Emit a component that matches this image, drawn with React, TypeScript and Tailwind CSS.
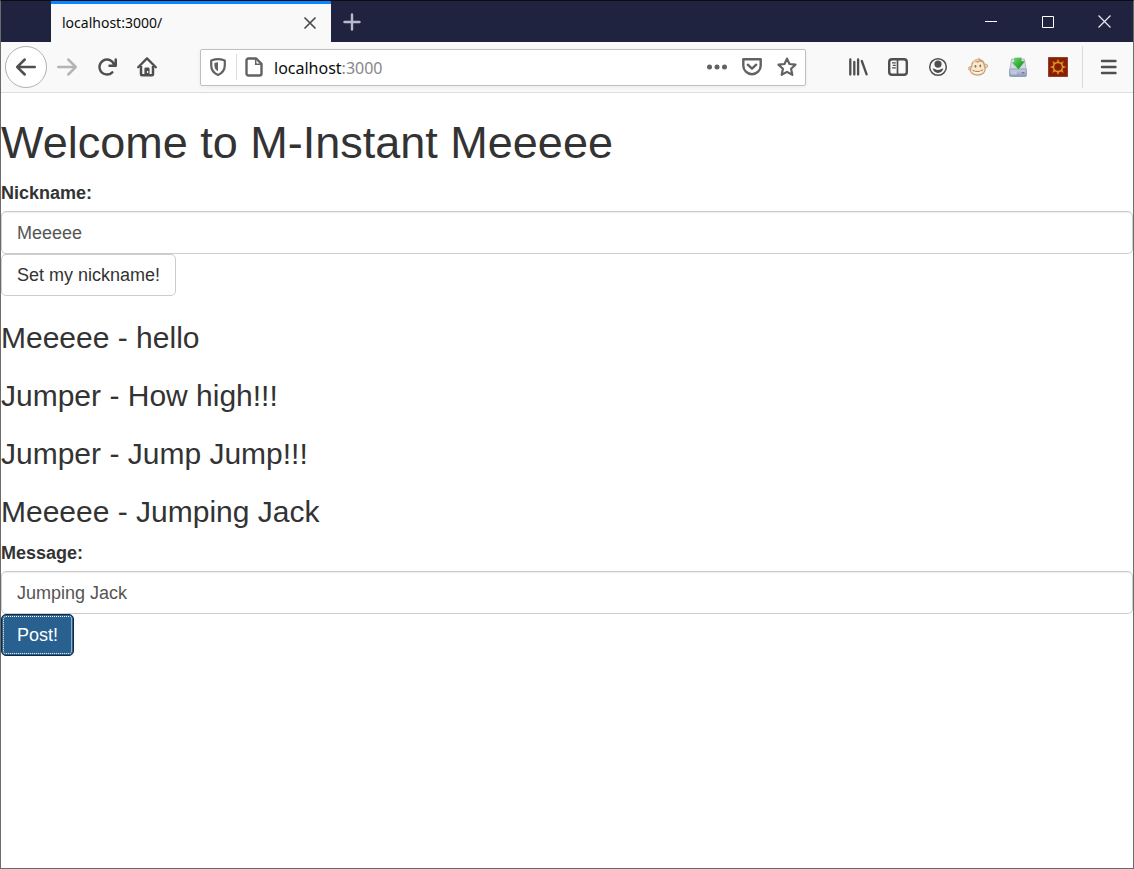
import { useState, type ReactNode } from "react";

function IconButton({ label, children }: { label: string; children: ReactNode }) {
  return (
    <button
      type="button"
      aria-label={label}
      className="flex h-10 w-10 shrink-0 items-center justify-center text-[#4f4f50]"
    >
      {children}
    </button>
  );
}

function ArrowLeft({ className }: { className?: string }) {
  return (
    <svg viewBox="0 0 16 16" fill="currentColor" className={className}>
      <path d="M15 7H3.414l4.293-4.293a1 1 0 0 0-1.414-1.414l-6 6a1 1 0 0 0 0 1.414l6 6a1 1 0 0 0 1.414-1.414L3.414 9H15a1 1 0 0 0 0-2z" />
    </svg>
  );
}

function ReloadIcon() {
  return (
    <svg viewBox="0 0 16 16" fill="currentColor" className="h-5 w-5">
      <path d="M15 1a1 1 0 0 0-1 1v2.418A6.995 6.995 0 1 0 8 15a6.954 6.954 0 0 0 4.95-2.05 1 1 0 0 0-1.414-1.414A5.019 5.019 0 1 1 12.549 6H10a1 1 0 0 0 0 2h5a1 1 0 0 0 1-1V2a1 1 0 0 0-1-1z" />
    </svg>
  );
}

function HomeIcon() {
  return (
    <svg viewBox="0 0 20 20" fill="none" stroke="currentColor" className="h-5 w-5">
      <path d="M1.200 10.200 10 1.400l8.800 8.800" strokeWidth="2.300" strokeLinecap="round" strokeLinejoin="round" />
      <path d="M4 9v8.200q0 1 1 1h10q1 0 1-1V9" strokeWidth="2.500" />
      <path d="M7.400 18v-6.200q0-1.300 1.300-1.300h2.600q1.300 0 1.300 1.300V18z" fill="currentColor" stroke="none" />
      <path d="M10.600 14v2" stroke="#f9f9fa" strokeWidth="1.300" />
    </svg>
  );
}

function ShieldIcon() {
  return (
    <svg viewBox="0 0 20 20" fill="none" stroke="currentColor" className="h-5 w-5">
      <path d="M10 2.200c2 0 4 .4 6.800 1.300v4.700c0 5-2.800 8-6.800 9.700-4-1.700-6.800-4.700-6.800-9.700V3.500C6 2.600 8 2.200 10 2.200z" strokeWidth="2.200" strokeLinejoin="round" />
      <path d="M10 5.300v9c-2.300-1.200-3.600-3.200-3.600-6.100V5.900Q8.500 5.300 10 5.300z" fill="currentColor" stroke="none" />
    </svg>
  );
}

function PageIcon() {
  return (
    <svg viewBox="0 0 20 20" fill="none" stroke="currentColor" className="h-5 w-5">
      <path d="M4.500 1.500h7.700L17.500 6.800v9.700q0 2-2 2h-11q-2 0-2-2v-13q0-2 2-2z" strokeWidth="2.400" strokeLinejoin="round" />
      <path d="M11.700 1.500v5.800h5.800" strokeWidth="1.500" />
    </svg>
  );
}

function PocketIcon() {
  return (
    <svg viewBox="0 0 20 20" fill="none" stroke="currentColor" strokeLinejoin="round" strokeLinecap="round" className="h-5 w-5">
      <path d="M1.300 2.300h17.400v6.500a8.700 8.400 0 0 1-17.400 0z" strokeWidth="2.400" />
      <path d="m5.800 7.700 4.200 3.900 4.200-3.900" strokeWidth="2.400" />
    </svg>
  );
}

function StarIcon() {
  return (
    <svg viewBox="0 0 20 20" fill="none" stroke="currentColor" className="h-5 w-5">
      <path d="m10 1.600 2.500 5.400 6 .7-4.400 4.100 1.200 6L10 14.900l-5.300 2.900 1.200-6L1.500 7.700l6-.7z" strokeWidth="2.200" strokeLinejoin="round" />
    </svg>
  );
}

function LibraryIcon() {
  return (
    <svg viewBox="0 0 20 20" fill="none" stroke="currentColor" strokeLinecap="round" className="h-5 w-5">
      <path d="M2.300 2.500v15M6.300 5v12.500M10.100 2.500v15" strokeWidth="2.300" />
      <path d="m13.800 4 4.800 13.300" strokeWidth="2.300" />
    </svg>
  );
}

function SidebarIcon() {
  return (
    <svg viewBox="0 0 20 20" fill="none" stroke="currentColor" className="h-5 w-5">
      <rect x="1.200" y="2.200" width="17.600" height="15.600" rx="2.800" strokeWidth="2.400" />
      <path d="M9.500 3v14" strokeWidth="1.700" />
      <path d="M4 5.900h3.800M4.800 8.400h3M4 10.900h3.800" strokeWidth="1.200" />
    </svg>
  );
}

function AccountIcon() {
  return (
    <svg viewBox="0 0 20 20" fill="currentColor" className="h-5 w-5">
      <circle cx="10" cy="10" r="8.300" fill="none" stroke="currentColor" strokeWidth="1.500" />
      <circle cx="10" cy="7.100" r="3.600" />
      <path d="M4.700 11.600c.8-.3 1.500 0 2.200.5 1.900 1.200 4.300 1.200 6.200 0 .7-.5 1.400-.8 2.200-.5-.6 2.800-2.700 4.400-5.300 4.400s-4.700-1.600-5.300-4.400z" />
    </svg>
  );
}

function MonkeyIcon() {
  return (
    <svg viewBox="0 0 20 20" className="h-5 w-5">
      <circle cx="2.300" cy="11.500" r="1.900" fill="#f1cfab" stroke="#c29b74" strokeWidth=".7" />
      <circle cx="17.700" cy="9" r="1.900" fill="#f1cfab" stroke="#c29b74" strokeWidth=".7" />
      <path d="M3.200 9C3 5 5.800 2.400 9 1.900c1-.7 2-.9 3-.9l-.6.9c3.600.3 5.800 3.300 5.600 6.700 1.400 3 .9 6.300-1.400 8.200-2.800 2.300-8.400 2.600-11.600.3-2.500-2-2.800-5.400-.8-8.100z" fill="#c5a07c" />
      <path d="M4.400 9.400c-.3-3.900 3-5.300 5.400-3.500 2-2.300 6-1.400 5.800 2.900 1.600 2.900.9 5.900-1.100 7.300-2.600 1.700-7 1.800-9.500.2-2.300-1.500-2.600-4.600-.6-6.900z" fill="#ffe6c6" />
      <path d="M4.800 5.300Q7.500 2.500 11 3" fill="none" stroke="#ead0b0" strokeWidth="1.500" />
      <ellipse cx="7.500" cy="9.300" rx=".9" ry="1.400" fill="#52867d" />
      <ellipse cx="12.300" cy="9" rx=".9" ry="1.400" fill="#52867d" />
      <path d="M5 13.500q5 2.700 9.700-.6" fill="none" stroke="#a87c5c" strokeWidth="1" strokeLinecap="round" />
      <path d="M6.500 15.300q3.500 1.300 6.500-.4" fill="none" stroke="#fff" strokeWidth=".9" />
    </svg>
  );
}

function DownloadIcon() {
  return (
    <svg viewBox="0 0 20 20" className="h-5 w-5">
      <defs>
        <linearGradient id="driveFace" x1="0" x2="0" y1="0" y2="1">
          <stop offset="0" stopColor="#c8d1e2" />
          <stop offset="1" stopColor="#8c9bb8" />
        </linearGradient>
        <linearGradient id="greenArrow" x1="0" x2="1" y1="0" y2="1">
          <stop offset="0" stopColor="#6fdc6a" />
          <stop offset="1" stopColor="#078a12" />
        </linearGradient>
      </defs>
      <path d="M3.600 2h12.800l1.900 10.500H1.700z" fill="#d3d9e5" stroke="#aab4c6" strokeWidth=".8" />
      <rect x="1.600" y="12" width="16.800" height="7.400" rx="1" fill="url(#driveFace)" stroke="#8190ab" strokeWidth=".8" />
      <path d="M3.800 14.500v3M5.800 14.500v3M7.800 14.500v3" stroke="#dfe6f1" strokeWidth=".8" />
      <path d="M13.800 15.800h2.600" stroke="#5f7096" strokeWidth="1.200" />
      <path d="M6.200.8 13.500.5v3.700H17l-6.500 8-6.700-6.600 2.400-.6z" fill="url(#greenArrow)" />
    </svg>
  );
}

function SunIcon() {
  return (
    <svg viewBox="0 0 20 20" className="h-5 w-5">
      <path d="M.4.400h19.200v19.200H.4z" fill="#8c1d02" stroke="#7a3216" strokeWidth=".8" />
      <circle cx="10" cy="10" r="4.500" fill="none" stroke="#dd9a26" strokeWidth="1.400" />
      <path
        d="m8.800 5.400 1.200-3 1.200 3zM8.800 14.600l1.200 3 1.200-3zM5.400 8.800l-3 1.200 3 1.200zM14.600 8.800l3 1.200-3 1.200zM5.900 7.600 4.600 4.600l3 1.300zM14.100 7.600l1.300-3-3 1.300zM5.900 12.400l-1.300 3 3-1.300zM14.100 12.400l1.300 3-3-1.300z"
        fill="#dd9a26"
        stroke="#dd9a26"
        strokeWidth=".4"
      />
    </svg>
  );
}

function TitleBar() {
  return (
    <div className="flex h-[41px] bg-[#202340] pl-[50px]">
      <div className="flex w-[280px] items-center justify-between border-t-3 border-[#0a84ff] bg-[#f9f9fa] pr-3 pl-[11px]">
        <span className="font-['Noto_Sans',sans-serif] text-sm text-[#0c0c0d]">localhost:3000/</span>
        <button type="button" aria-label="Close tab" className="flex h-[18px] w-[18px] items-center justify-center">
          <svg viewBox="0 0 12 12" className="h-3 w-3" stroke="#4a4a4b" strokeWidth="1.700" strokeLinecap="round">
            <path d="m1 1 10 10M11 1 1 11" />
          </svg>
        </button>
      </div>
      <button type="button" aria-label="New tab" className="flex w-[42px] items-center justify-center">
        <svg viewBox="0 0 18 18" className="h-[18px] w-[18px]" stroke="#b9bac6" strokeWidth="2.400" strokeLinecap="round">
          <path d="M9 1.500v15M1.500 9h15" />
        </svg>
      </button>
      <div className="ml-auto flex">
        <button type="button" aria-label="Minimize" className="flex w-[57px] items-center justify-center">
          <svg viewBox="0 0 12 12" className="h-3 w-3" stroke="#fff">
            <path d="M0 5.500h12" />
          </svg>
        </button>
        <button type="button" aria-label="Maximize" className="flex w-[57px] items-center justify-center">
          <svg viewBox="0 0 12 12" className="h-3 w-3" stroke="#fff" fill="none">
            <path d="M.5.500h11v11H.5z" />
          </svg>
        </button>
        <button type="button" aria-label="Close" className="flex w-[57px] items-center justify-center">
          <svg viewBox="0 0 13 13" className="h-[13px] w-[13px]" stroke="#e8e8ee" strokeWidth="1.200">
            <path d="m.5.500 12 12M12.500.5l-12 12" />
          </svg>
        </button>
      </div>
    </div>
  );
}

function AddressBar() {
  return (
    <div className="mr-8 ml-[33px] flex h-[37px] min-w-0 flex-1 items-center rounded-[2px] border border-[#bfbfbf] bg-white pr-2 pl-[7px] text-[#626263] shadow-[0_1px_4px_rgba(0,0,0,0.06)]">
      <ShieldIcon />
      <span className="mr-[7px] ml-2 h-[26px] w-px bg-[#dcdcdd]" />
      <PageIcon />
      <div className="ml-[10px] flex-1 pt-0.5 font-['Noto_Sans',sans-serif] text-base text-[#0c0c0d]">
        localhost<span className="text-[#87878a]">:3000</span>
      </div>
      <div className="flex items-center gap-[15px]">
        <button type="button" aria-label="Page actions">
          <svg viewBox="0 0 20 20" fill="currentColor" className="h-5 w-5">
            <circle cx="2.500" cy="10" r="2.500" />
            <circle cx="10" cy="10" r="2.500" />
            <circle cx="17.500" cy="10" r="2.500" />
          </svg>
        </button>
        <button type="button" aria-label="Save to Pocket">
          <PocketIcon />
        </button>
        <button type="button" aria-label="Bookmark this page">
          <StarIcon />
        </button>
      </div>
    </div>
  );
}

function Toolbar() {
  return (
    <div className="flex h-[51px] items-center border-b border-[#dededf] bg-[#f9f9fa] pr-[5px] pl-1">
      <button
        type="button"
        aria-label="Back"
        className="flex h-[42px] w-[42px] shrink-0 items-center justify-center rounded-full border border-[#b1b1b2] bg-white text-[#4f4f50]"
      >
        <ArrowLeft className="h-5 w-5" />
      </button>
      <button type="button" aria-label="Forward" className="flex h-10 w-10 shrink-0 items-center justify-center text-[#b5b5b6]">
        <ArrowLeft className="h-5 w-5 rotate-180" />
      </button>
      <IconButton label="Reload"><ReloadIcon /></IconButton>
      <IconButton label="Home"><HomeIcon /></IconButton>
      <AddressBar />
      <IconButton label="Library"><LibraryIcon /></IconButton>
      <IconButton label="Sidebars"><SidebarIcon /></IconButton>
      <IconButton label="Account"><AccountIcon /></IconButton>
      <IconButton label="Greasemonkey"><MonkeyIcon /></IconButton>
      <IconButton label="Download helper"><DownloadIcon /></IconButton>
      <IconButton label="Sun extension"><SunIcon /></IconButton>
      <span className="mr-[5px] ml-1 h-[42px] w-px shrink-0 bg-[#dcdcdd]" />
      <IconButton label="Menu">
        <svg viewBox="0 0 20 20" className="h-5 w-5" stroke="currentColor" strokeWidth="2.400" strokeLinecap="round">
          <path d="M4 4h13.500M4 10h13.500M4 16h13.500" />
        </svg>
      </IconButton>
    </div>
  );
}

function Field({ id, label, initial }: { id: string; label: string; initial: string }) {
  const [value, setValue] = useState(initial);
  return (
    <>
      <label htmlFor={id} className="mb-[5px] block font-bold">{label}</label>
      <input
        id={id}
        type="text"
        value={value}
        onChange={(e) => setValue(e.target.value)}
        className="block h-[43px] w-full rounded-[5px] border border-[#ccc] bg-white px-[15px] pt-0.5 text-[#555] shadow-[inset_0_1px_1px_rgba(0,0,0,0.075)] outline-none"
      />
    </>
  );
}

const messages = [
  { from: "Meeeee", text: "hello" },
  { from: "Jumper", text: "How high!!!" },
  { from: "Jumper", text: "Jump Jump!!!" },
  { from: "Meeeee", text: "Jumping Jack" },
];

export default function App() {
  return (
    <div className="flex min-h-screen flex-col border border-[#6b6b6b] border-t-[#0b0c16] bg-white">
      <TitleBar />
      <Toolbar />
      <main className="pt-[25px] font-['Liberation_Sans',Arial,sans-serif] text-lg leading-[25px] text-[#333]">
        <h1 className="mb-[13px] text-[45px] leading-[50px]">Welcome to M-Instant Meeeee</h1>
        <Field id="nickname" label="Nickname:" initial="Meeeee" />
        <button type="button" className="block h-[42px] rounded-[5px] border border-[#ccc] bg-white px-[15px]">
          Set my nickname!
        </button>
        <div className="mt-[25px] mb-[13px] flex flex-col gap-[25px]">
          {messages.map((m, i) => (
            <h3 key={i} className="text-[30px] leading-[33px]">
              {m.from} - {m.text}
            </h3>
          ))}
        </div>
        <Field id="message" label="Message:" initial="Jumping Jack" />
        <button
          type="button"
          className="block h-[42px] rounded-[5px] border border-[#122b40] bg-[#286090] px-[15px] text-white outline-1 -outline-offset-3 outline-dotted outline-white"
        >
          Post!
        </button>
      </main>
    </div>
  );
}
